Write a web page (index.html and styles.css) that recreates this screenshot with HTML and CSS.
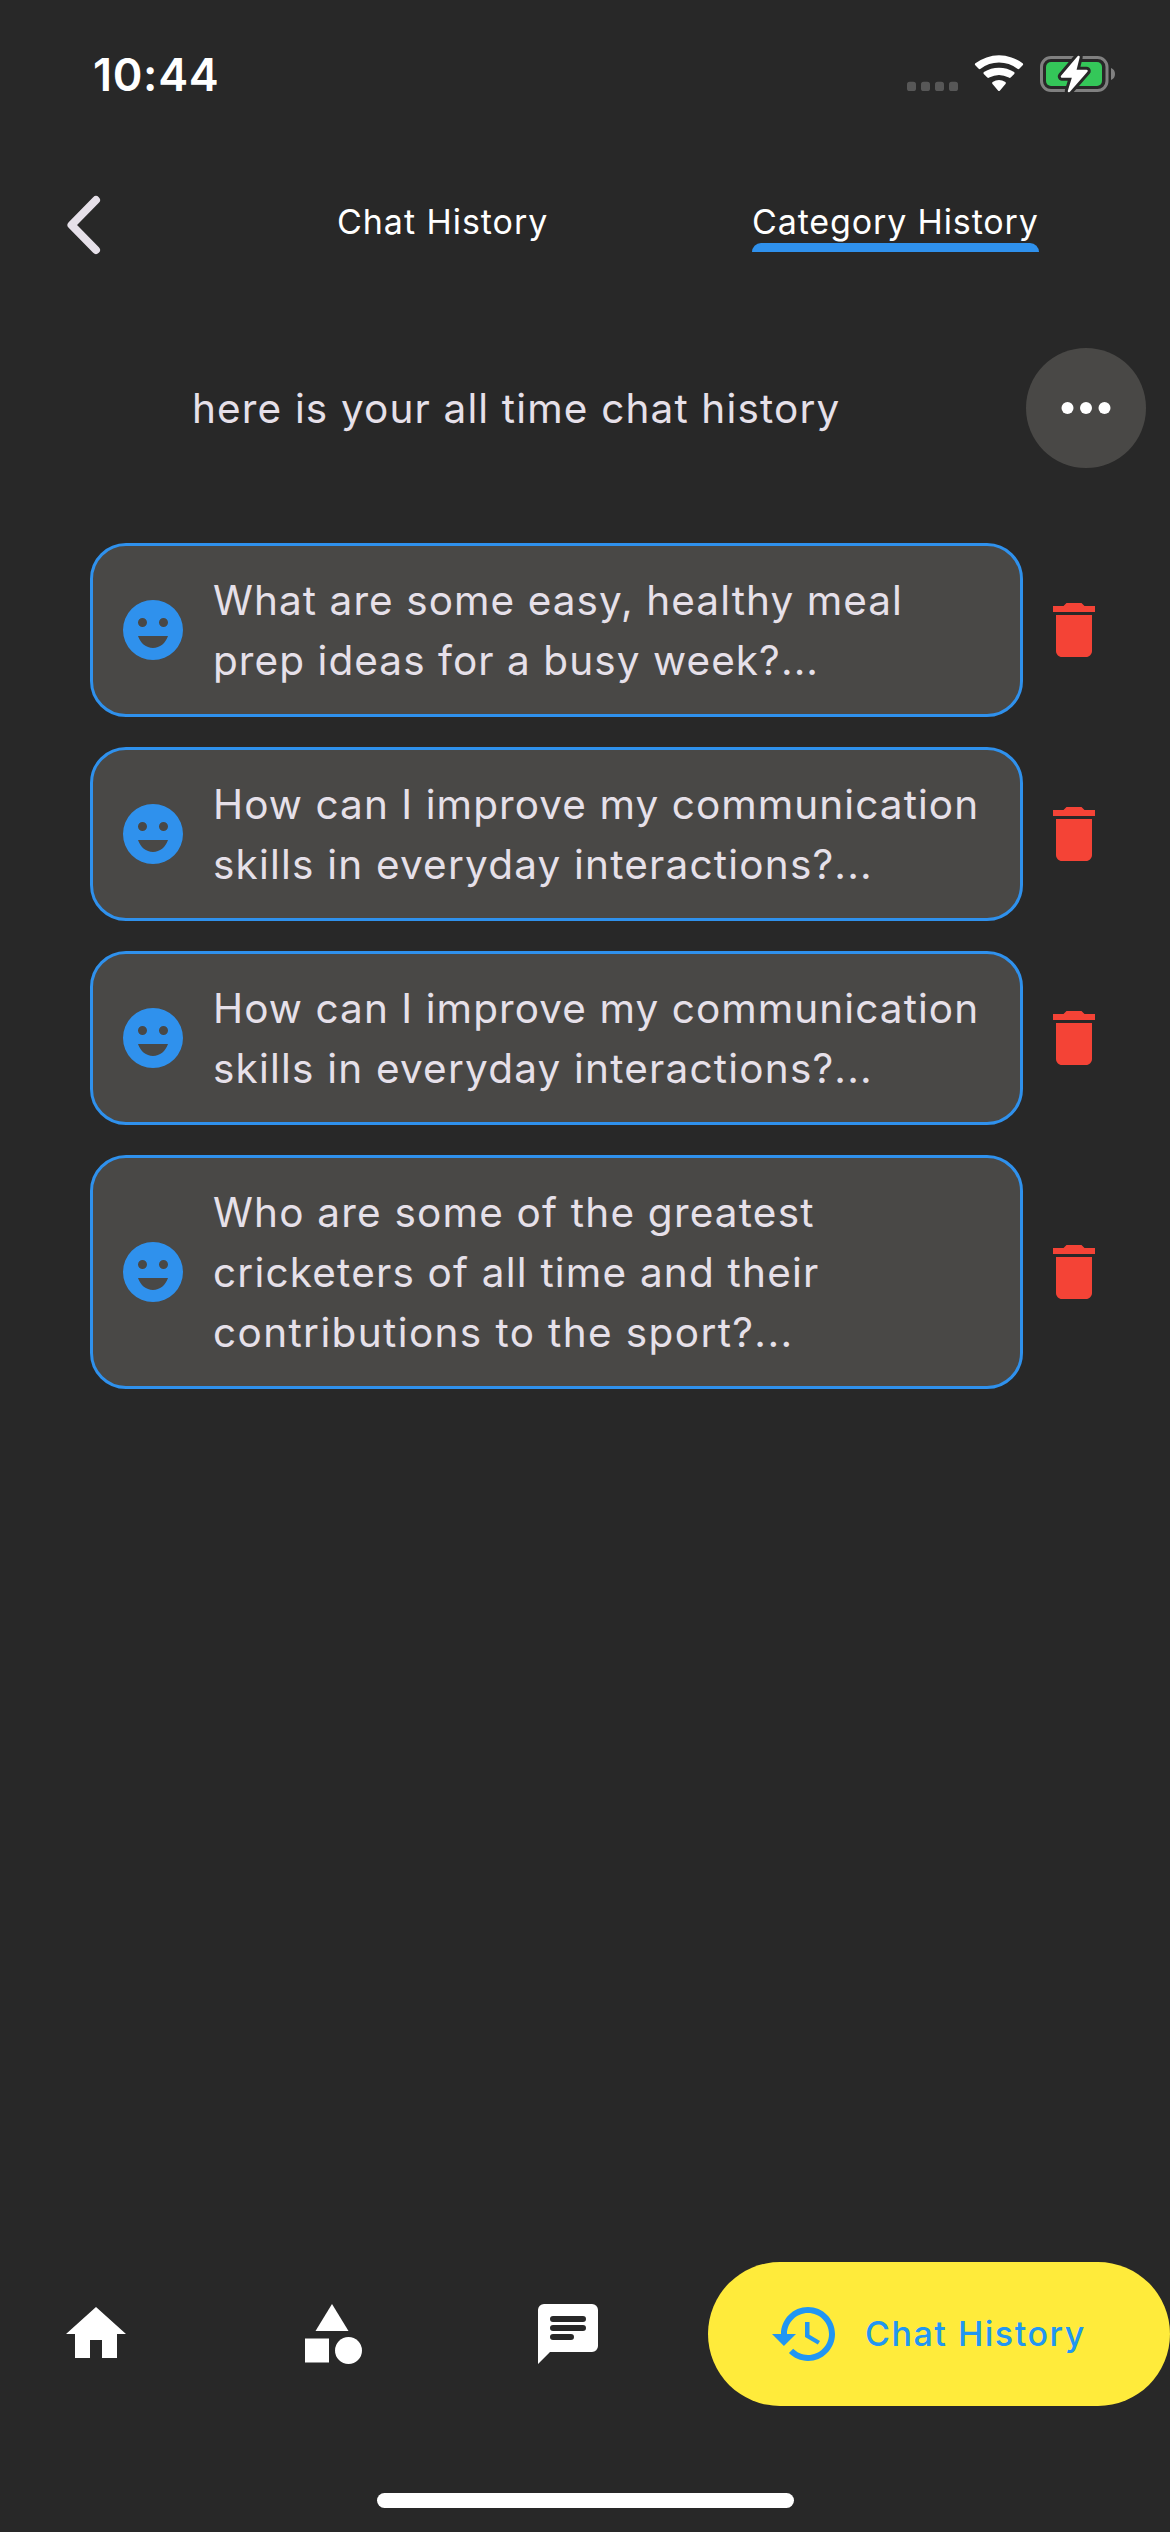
FILE: index.html
```
<!DOCTYPE html>
<html lang="en">
<head>
<meta charset="utf-8">
<title>Category History</title>
<link rel="stylesheet" href="styles.css">
</head>
<body>
<svg class="defs" aria-hidden="true">
  <symbol id="smile" viewBox="0 0 24 24"><path fill-rule="evenodd" d="M12 2a10 10 0 1 0 0 20 10 10 0 0 0 0-20zM8.5 8a1.5 1.5 0 1 1 0 3 1.5 1.5 0 0 1 0-3zM12 18c-2.280 0-4.220-1.660-5-4h10c-.780 2.340-2.720 4-5 4zM15.500 11a1.500 1.500 0 1 1 0-3 1.500 1.500 0 0 1 0 3z"/></symbol>
  <symbol id="trash" viewBox="0 0 24 24"><path d="M6 19c0 1.100.9 2 2 2h8c1.100 0 2-.9 2-2V7H6v12zM19 4h-3.500l-1-1h-5l-1 1H5v2h14V4z"/></symbol>
</svg>
<div class="screen">
  <header class="status">
    <span class="time">10:44</span>
    <svg class="status-icons" viewBox="0 0 210 46" width="210" height="46">
      <g fill="#575757"><rect x="2" y="31.700" width="9" height="9.300" rx="2.600"/><rect x="16" y="31.700" width="9" height="9.300" rx="2.600"/><rect x="30" y="31.700" width="9" height="9.300" rx="2.600"/><rect x="44" y="31.700" width="9" height="9.300" rx="2.600"/></g>
      <g fill="#fff">
        <path d="M70.300 15.300a1.400 1.400 0 0 1 .1-2A39 39 0 0 1 117.600 13.300a1.400 1.400 0 0 1 .1 2L114.300 18.800a1.400 1.400 0 0 1-1.900 0A30.500 30.500 0 0 0 75.600 18.800a1.400 1.400 0 0 1-1.900 0z"/>
        <path d="M78.800 24a1.400 1.400 0 0 1 .1-2A28.500 28.500 0 0 1 109.100 22a1.400 1.400 0 0 1 .1 2L105.700 27.500a1.400 1.400 0 0 1-1.900 0A21 21 0 0 0 84.200 27.500a1.400 1.400 0 0 1-1.900 0z"/>
        <path d="M87.500 34a1.300 1.300 0 0 1 .1-1.900A11.500 11.500 0 0 1 100.400 32.100a1.300 1.300 0 0 1 .1 1.900L95 40.400a1.400 1.400 0 0 1-2 0z"/>
      </g>
      <rect x="136.500" y="7.500" width="65.500" height="33" rx="9.500" fill="none" stroke="#808080" stroke-width="3"/>
      <path d="M206 18c2.700 1 4 3.300 4 6s-1.300 5-4 6z" fill="#808080"/>
      <rect x="141" y="12" width="56" height="24" rx="5" fill="#34c759"/>
      <path d="M173.500 7L157 26.500h11.500L164 41 L181.500 21H170z" fill="#fff" stroke="#282828" stroke-width="8.500" stroke-linejoin="round"/>
      <path d="M173.500 7L157 26.500h11.500L164 41 L181.500 21H170z" fill="#fff" stroke="#fff" stroke-width="2.500" stroke-linejoin="round"/>
    </svg>
  </header>
  <nav class="tabs">
    <svg class="back" viewBox="0 0 40 60" width="40" height="60"><path d="M32 5L7.500 30 32 55" fill="none" stroke="#e6e0e9" stroke-width="8" stroke-linecap="round" stroke-linejoin="round"/></svg>
    <span class="tab tab-chat">Chat History</span>
    <span class="tab tab-category">Category History</span>
  </nav>
  <section class="intro">
    <h1>here is your all time chat history</h1>
    <svg class="more" viewBox="0 0 120 120" width="120" height="120"><circle cx="60" cy="60" r="60" fill="#494846"/><g fill="#fff"><circle cx="41.500" cy="60" r="6"/><circle cx="60" cy="60" r="6"/><circle cx="78.500" cy="60" r="6"/></g></svg>
  </section>
  <main class="list">
    <div class="row"><div class="card"><svg class="icon smile"><use href="#smile"/></svg><p>What are some easy, healthy meal<br>prep ideas for a busy week?...</p></div><svg class="icon trash"><use href="#trash"/></svg></div>
    <div class="row"><div class="card"><svg class="icon smile"><use href="#smile"/></svg><p>How can I improve my communication<br><span class="loose">skills in everyday interactions?...</span></p></div><svg class="icon trash"><use href="#trash"/></svg></div>
    <div class="row"><div class="card"><svg class="icon smile"><use href="#smile"/></svg><p>How can I improve my communication<br><span class="loose">skills in everyday interactions?...</span></p></div><svg class="icon trash"><use href="#trash"/></svg></div>
    <div class="row"><div class="card"><svg class="icon smile"><use href="#smile"/></svg><p><span class="loose">Who are some of the greatest</span><br><span class="loose">cricketers of all time and their</span><br><span class="looser">contributions to the sport?...</span></p></div><svg class="icon trash"><use href="#trash"/></svg></div>
  </main>
  <footer class="bottom">
    <svg class="icon nav-icon" viewBox="0 0 24 24"><path d="M10 20v-6h4v6h5v-8h3L12 3 2 12h3v8z"/></svg>
    <svg class="icon nav-icon" viewBox="0 0 24 24"><path d="M12 2l-5.500 9h11z"/><circle cx="17.500" cy="17.500" r="4.500"/><path d="M3 13.500h8v8H3z"/></svg>
    <svg class="icon nav-icon" viewBox="0 0 24 24"><path fill-rule="evenodd" d="M4 2h16a2 2 0 0 1 2 2v12a2 2 0 0 1-2 2H6l-4 4V4a2 2 0 0 1 2-2zM7 6a1 1 0 0 0 0 2h10a1 1 0 0 0 0-2zM7 9a1 1 0 0 0 0 2h10a1 1 0 0 0 0-2zM7 12a1 1 0 0 0 0 2h6a1 1 0 0 0 0-2z"/></svg>
    <div class="pill">
      <svg class="icon" viewBox="0 0 24 24"><path d="M13 3c-4.970 0-9 4.030-9 9H1l3.890 3.890.070.140L9 12H6c0-3.870 3.130-7 7-7s7 3.130 7 7-3.130 7-7 7c-1.930 0-3.680-.790-4.940-2.060l-1.420 1.420C8.270 19.990 10.510 21 13 21c4.970 0 9-4.030 9-9s-4.030-9-9-9zm-1 5v5l4.280 2.540.720-1.210-3.500-2.080V8H12z"/></svg>
      <span>Chat History</span>
    </div>
  </footer>
  <div class="home-bar"></div>
</div>
</body>
</html>
```
FILE: styles.css
```
* { box-sizing: border-box; }
body { margin: 0; background: #282828; font-family: Inter, "Liberation Sans", sans-serif; }
.defs { display: none; }
.screen { width: 1170px; height: 2532px; display: flex; flex-direction: column; color: #e6e0e9; overflow: hidden; }
svg { display: block; flex: none; }
.icon { width: 72px; height: 72px; fill: currentColor; }

.status { height: 150px; display: flex; align-items: flex-start; justify-content: space-between; padding: 50px 55px 0 93px; color: #fff; }
.time { font-size: 45px; font-weight: 600; line-height: 50px; letter-spacing: .7px; white-space: nowrap; }

.tabs { height: 150px; display: flex; align-items: flex-start; padding: 45px 0 0 64px; color: #fff; }
.tab { height: 57px; font-size: 34px; line-height: 54px; white-space: nowrap; }
.tab-chat { margin-left: 233px; width: 212px; letter-spacing: .96px; }
.tab-category { margin-left: 203px; width: 287px; letter-spacing: .87px; display: flex; flex-direction: column; }
.tab-category::after { content: ""; height: 9px; margin-top: -6px; background: #2f91ed; border-radius: 9px 9px 0 0; }

.intro { height: 243px; display: flex; align-items: flex-start; justify-content: space-between; padding: 48px 24px 0 192px; }
h1 { margin: 0; font-size: 40.5px; font-weight: 400; line-height: 122px; letter-spacing: 1.15px; white-space: nowrap; }

.list { flex: 1; display: flex; flex-direction: column; gap: 30px; padding-left: 90px; }
.row { display: flex; align-items: center; gap: 15px; }
.card { width: 933px; display: flex; align-items: center; gap: 24px; padding: 24px; background: #494846; border: 3px solid #2f91ed; border-radius: 36px; }
.card p { margin: 1px 0 -1px; font-size: 40.5px; font-weight: 400; line-height: 60px; letter-spacing: 1.07px; white-space: nowrap; }
.card .loose { letter-spacing: 1.2px; }
.card .looser { letter-spacing: 1.38px; }
.smile { color: #2f91ed; }
.trash { color: #f44336; }

.bottom { height: 144px; display: flex; align-items: center; gap: 164px; padding-left: 60px; color: #fff; }
.pill { width: 462px; height: 144px; flex: none; margin-left: -60px; padding-left: 61px; display: flex; align-items: center; gap: 24px; background: #ffeb3b; border-radius: 72px; color: #2196f3; }
.pill span { font-size: 34px; font-weight: 500; letter-spacing: 1.52px; white-space: nowrap; padding-bottom: 2px; }
.home-bar { width: 417px; height: 15px; margin: 87px 0 24px 377px; border-radius: 8px; background: #fff; }
```
